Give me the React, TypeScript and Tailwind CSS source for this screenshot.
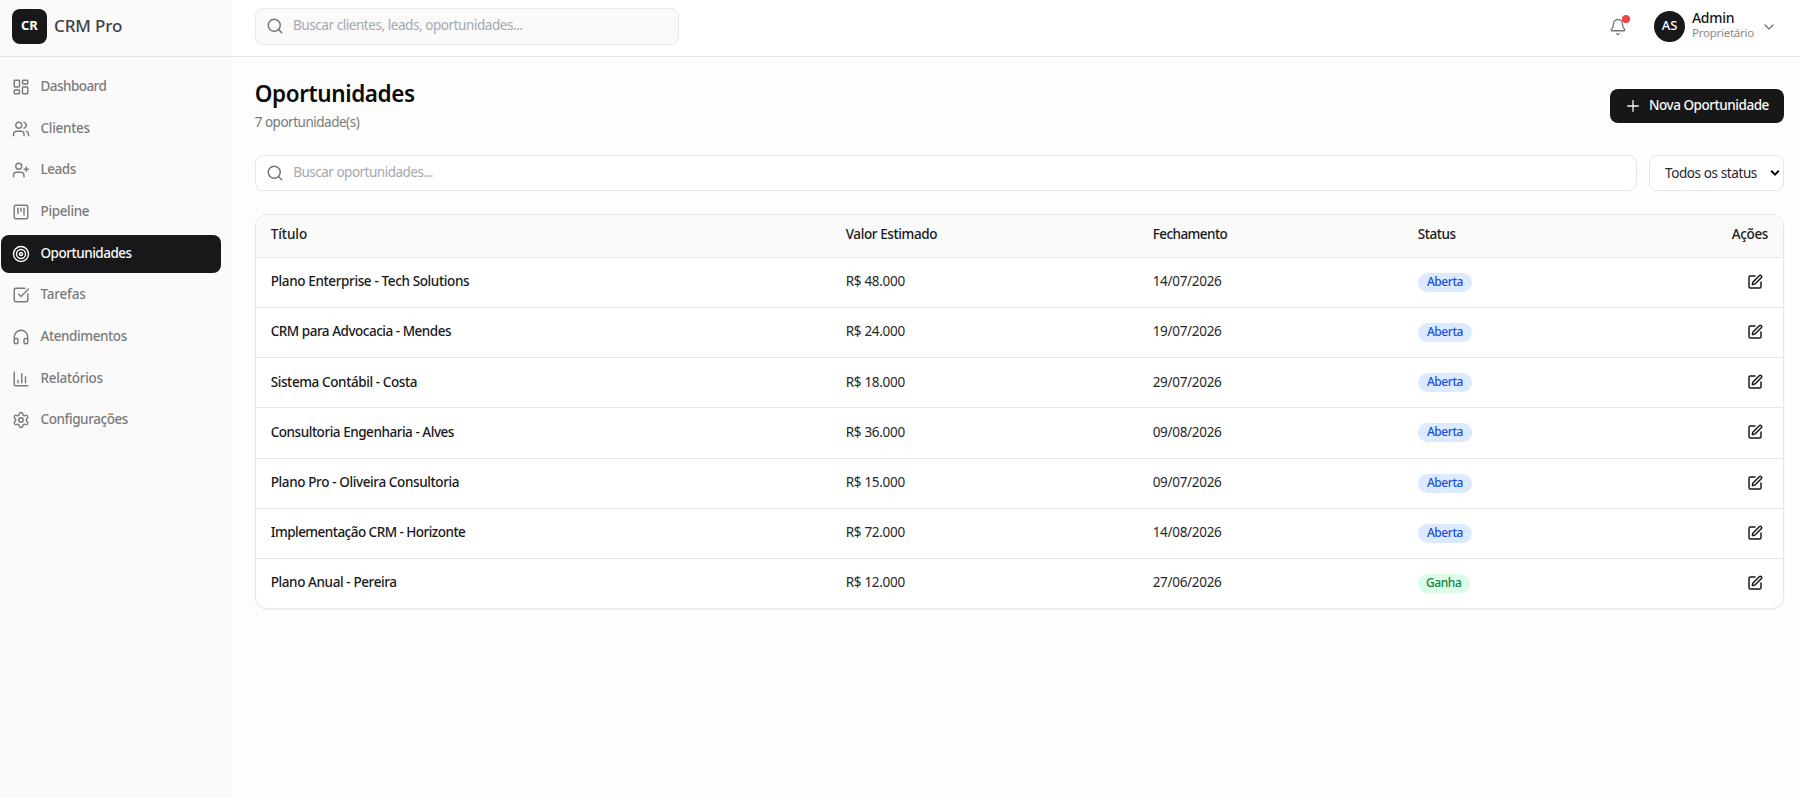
import { Bell, ChartColumn, ChevronDown, Headphones, LayoutDashboard, Plus, Search, Settings, SquareCheckBig, SquareKanban, SquarePen, Target, UserPlus, Users } from "lucide-react";
import type { LucideIcon } from "lucide-react";

type NavItem = { label: string; icon: LucideIcon; active?: boolean; spacing: string };
type Opportunity = { title: string; value: string; closing: string; status: "Aberta" | "Ganha"; spacing: string };

const navItems: NavItem[] = [
    { label: "Dashboard", icon: LayoutDashboard, spacing: "tracking-[-0.55px]" },
    { label: "Clientes", icon: Users, spacing: "tracking-[-0.28px]" },
    { label: "Leads", icon: UserPlus, spacing: "tracking-[-0.45px]" },
    { label: "Pipeline", icon: SquareKanban, spacing: "tracking-[-0.35px]" },
    { label: "Oportunidades", icon: Target, active: true, spacing: "tracking-[-0.48px]" },
    { label: "Tarefas", icon: SquareCheckBig, spacing: "tracking-[-0.22px]" },
    { label: "Atendimentos", icon: Headphones, spacing: "tracking-[-0.41px]" },
    { label: "Relatórios", icon: ChartColumn, spacing: "tracking-[-0.29px]" },
    { label: "Configurações", icon: Settings, spacing: "tracking-[-0.42px]" },
];

const opportunities: Opportunity[] = [
    { title: "Plano Enterprise - Tech Solutions", value: "R$ 48.000", closing: "14/07/2026", status: "Aberta", spacing: "tracking-[-0.37px]" },
    { title: "CRM para Advocacia - Mendes", value: "R$ 24.000", closing: "19/07/2026", status: "Aberta", spacing: "tracking-[-0.48px]" },
    { title: "Sistema Contábil - Costa", value: "R$ 18.000", closing: "29/07/2026", status: "Aberta", spacing: "tracking-[-0.4px]" },
    { title: "Consultoria Engenharia - Alves", value: "R$ 36.000", closing: "09/08/2026", status: "Aberta", spacing: "tracking-[-0.46px]" },
    { title: "Plano Pro - Oliveira Consultoria", value: "R$ 15.000", closing: "09/07/2026", status: "Aberta", spacing: "tracking-[-0.38px]" },
    { title: "Implementação CRM - Horizonte", value: "R$ 72.000", closing: "14/08/2026", status: "Aberta", spacing: "tracking-[-0.53px]" },
    { title: "Plano Anual - Pereira", value: "R$ 12.000", closing: "27/06/2026", status: "Ganha", spacing: "tracking-[-0.4px]" },
];

const badgeStyles = {
    Aberta: "w-[54.5px] bg-[#dbeafe] text-[#1d4ed8]",
    Ganha: "w-[52px] bg-[#dcfce7] text-[#15803d]",
};

const Sidebar = () => (
    <aside className="flex w-[232px] shrink-0 flex-col bg-[#fafafa]">
        <div className="flex h-[57px] items-start gap-[7.5px] border-b border-[#e4e4e4] pl-3 pt-[9px]">
            <div className="flex size-[34.5px] items-center justify-center rounded-lg bg-[#18181b] pb-px text-[13px] font-bold tracking-[-0.3px] text-white">CR</div>
            <span className="pt-[5px] text-[17px] leading-6 font-medium tracking-[-0.15px] text-[#3f3f46]">CRM Pro</span>
        </div>
        <nav className="flex flex-col gap-[3.67px] pl-px pr-[11.5px] pt-[11px]">
            {navItems.map(({ label, icon: Icon, active, spacing }) => (
                <a
                    key={label}
                    className={`flex h-[38px] items-center gap-[10.5px] rounded-lg pl-[11px] ${active ? "bg-[#18181b] text-[#fafafa]" : "text-[#7a7a7a]"}`}
                >
                    <Icon className="size-[18px]" strokeWidth={1.9} />
                    <span className={`pb-[2px] text-[13.5px] leading-5 font-medium ${spacing}`}>{label}</span>
                </a>
            ))}
        </nav>
    </aside>
);

const Topbar = () => (
    <header className="flex h-[57px] shrink-0 items-start justify-between border-b border-[#e4e4e4] bg-white pl-[22.5px] pr-[23px]">
        <div className="mt-2 flex h-[36.5px] w-[424px] items-center gap-[9.5px] rounded-lg border border-[#e8e8e8] bg-[#fafafa] pl-[10px]">
            <Search className="size-[18px] text-[#737373]" strokeWidth={1.9} />
            <span className="pb-[2px] text-[13.5px] leading-5 tracking-[-0.44px] text-[#a3a8b0]">Buscar clientes, leads, oportunidades...</span>
        </div>
        <div className="flex h-[53px] items-center">
            <div className="relative mr-[27px]">
                <Bell className="size-[18px] text-[#737373]" strokeWidth={1.75} />
                <span className="absolute -top-[3px] left-[13px] size-2 rounded-full bg-[#ef4444]" />
            </div>
            <div className="flex size-[31px] items-center justify-center rounded-full bg-[#18181b] pb-px text-[13px] font-medium text-white">AS</div>
            <div className="ml-[7px] flex w-[62px] flex-col pb-[3px] whitespace-nowrap">
                <span className="text-sm leading-4 font-medium tracking-[-0.3px] text-[#18181b]">Admin</span>
                <span className="text-[11.5px] leading-[14px] tracking-[-0.25px] text-[#8a8a8a]">Proprietário</span>
            </div>
            <ChevronDown className="ml-[7px] size-4 text-[#737373]" strokeWidth={1.9} />
        </div>
    </header>
);

const OpportunitiesTable = () => (
    <div className="mt-[23px] overflow-hidden rounded-xl border border-[#e6e6e6] bg-white text-[13.5px] leading-5 shadow-xs">
        <table className="w-full table-fixed border-collapse">
            <colgroup>
                <col className="w-[575px]" />
                <col className="w-[307px]" />
                <col className="w-[265px]" />
                <col />
                <col className="w-[120px]" />
            </colgroup>
            <thead>
                <tr className="h-[42.5px] border-b border-[#e8e8e8] bg-[#fafafa] text-left text-[#18181b]">
                    <th className="px-[15px] pb-[4px] font-medium tracking-[-0.05px]">Título</th>
                    <th className="px-[15px] pb-[4px] font-medium tracking-[-0.39px]">Valor Estimado</th>
                    <th className="px-[15px] pb-[4px] font-medium tracking-[-0.56px]">Fechamento</th>
                    <th className="px-[15px] pb-[4px] font-medium tracking-[-0.43px]">Status</th>
                    <th className="px-[15px] pb-[4px] text-right font-medium tracking-[-0.38px]">Ações</th>
                </tr>
            </thead>
            <tbody>
                {opportunities.map(({ title, value, closing, status, spacing }) => (
                    <tr key={title} className="h-[50.15px] border-b border-[#e8e8e8] last:border-b-0">
                        <td className={`px-[15px] pb-[2.5px] font-medium text-[#18181b] ${spacing}`}>{title}</td>
                        <td className="px-[15px] pb-[2.5px] tracking-[-0.3px] text-[#27272a]">{value}</td>
                        <td className="px-[15px] pb-[2.5px] tracking-[-0.3px] text-[#27272a]">{closing}</td>
                        <td className="px-[15px]">
                            <span className={`flex h-[19px] items-center justify-center rounded-full pb-px text-xs font-medium tracking-[-0.45px] ${badgeStyles[status]}`}>{status}</span>
                        </td>
                        <td className="pr-[20.5px] pb-px">
                            <SquarePen className="ml-auto size-4 text-[#18181b]" strokeWidth={2.2} />
                        </td>
                    </tr>
                ))}
            </tbody>
        </table>
    </div>
);

export default function App() {
    return (
        <div className="flex h-[798px] w-full overflow-hidden bg-[#fdfdfd] font-['Noto_Sans',sans-serif]">
            <Sidebar />
            <div className="flex min-w-0 flex-1 flex-col">
                <Topbar />
                <main className="flex flex-col pl-[22.7px] pr-4 pt-[22px]">
                    <div className="flex h-[76px] items-start justify-between">
                        <div className="flex flex-col">
                            <h1 className="text-[22.5px] leading-[30px] font-semibold tracking-[-0.4px] text-[#0a0a0a]">Oportunidades</h1>
                            <p className="mt-[3px] text-[13.5px] leading-5 tracking-[-0.49px] text-[#7a7a7a]">7 oportunidade(s)</p>
                        </div>
                        <button className="mt-[10px] flex h-[34px] w-[174px] items-center gap-[7px] rounded-lg bg-[#171717] pl-[14px] text-[#fafafa]">
                            <Plus className="size-[18px] shrink-0" strokeWidth={1.75} />
                            <span className="pb-[2px] text-[13.5px] leading-5 font-medium tracking-[-0.46px] whitespace-nowrap">Nova Oportunidade</span>
                        </button>
                    </div>
                    <div className="flex gap-[12px]">
                        <div className="flex h-[36px] flex-1 items-center gap-[9.5px] rounded-lg border border-[#e6e6e6] bg-white pl-[10px]">
                            <Search className="size-[18px] text-[#737373]" strokeWidth={1.9} />
                            <span className="pb-[2px] text-[13.5px] leading-5 tracking-[-0.5px] text-[#a3a8b0]">Buscar oportunidades...</span>
                        </div>
                        <div className="flex h-[36px] w-[135px] items-center justify-between rounded-lg border border-[#e6e6e6] bg-white pl-[15px] pr-[3px] text-[#27272a]">
                            <span className="text-[13.5px] leading-5 tracking-[-0.4px] whitespace-nowrap">Todos os status</span>
                            <svg viewBox="0 0 10 8" className="h-2 w-[10px]" fill="none" stroke="#0a0a0a" strokeWidth="2">
                                <path d="M1.2 1.8 5 5.6 8.8 1.8" />
                            </svg>
                        </div>
                    </div>
                    <OpportunitiesTable />
                </main>
            </div>
        </div>
    );
}
